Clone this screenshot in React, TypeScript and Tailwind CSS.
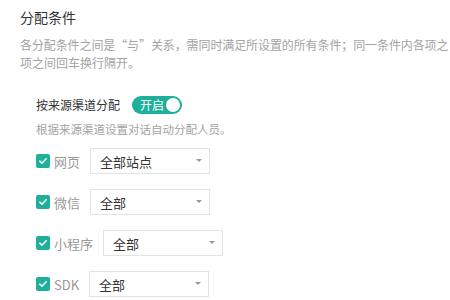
import { Fragment } from "react"

type Channel = {
    label: string
    value: string
}

const channels: Channel[] = [
    { label: "网页", value: "全部站点" },
    { label: "微信", value: "全部" },
    { label: "小程序", value: "全部" },
    { label: "SDK", value: "全部" },
]

function CheckBox() {
    return (
        <span className="flex size-[14px] shrink-0 items-center justify-center rounded-[2px] bg-[#1eb09a]">
            <svg viewBox="0 0 12 12" className="size-[10px]" fill="none">
                <path d="M2.2 6.2 L4.8 8.6 L9.8 3.4" stroke="white" strokeWidth="1.8" strokeLinecap="round" strokeLinejoin="round" />
            </svg>
        </span>
    )
}

function Select({ value }: { value: string }) {
    return (
        <div className="flex h-[26px] w-[120px] items-center justify-between border border-[#e3e3e3] bg-white pl-[9px] pr-[7px] text-[13px] leading-none text-[#333]">
            <span>{value}</span>
            <span className="mb-[1px] h-0 w-0 border-x-[3px] border-t-[3px] border-x-transparent border-t-[#999]" />
        </div>
    )
}

export default function App() {
    return (
        <div className="h-[300px] w-[450px] overflow-hidden bg-white pl-[20px] pt-[7px] font-['Noto_Sans_CJK_SC','Noto_Sans',sans-serif]">
            <h2 className="text-[14px] leading-[20px] text-[#333]">分配条件</h2>
            <div className="mt-[9px] text-[12px] leading-[18px] text-[#a3a3a3]">
                <p className="whitespace-nowrap tracking-[-0.1px]">各分配条件之间是“与”关系，需同时满足所设置的所有条件；同一条件内各项之</p>
                <p>项之间回车换行隔开。</p>
            </div>

            <div className="mt-[24px] pl-[16px]">
                <div className="flex items-center gap-[12px]">
                    <span className="text-[12px] leading-[18px] text-[#333]">按来源渠道分配</span>
                    <button className="flex h-[18px] w-[50px] items-center justify-between rounded-full bg-[#1eb09a] pl-[8px] pr-[2px]">
                        <span className="text-[12px] leading-none text-white">开启</span>
                        <span className="size-[14px] rounded-full bg-white" />
                    </button>
                </div>
                <p className="mt-[6px] text-[11.5px] leading-[18px] text-[#a3a3a3]">根据来源渠道设置对话自动分配人员。</p>

                <div className="mt-[10px] flex flex-col gap-[15px]">
                    {channels.map(ch => (
                        <Fragment key={ch.label}>
                            <div className="flex items-center">
                                <CheckBox />
                                <span className="ml-[4px] mr-[10px] text-[13px] leading-none text-[#999]">{ch.label}</span>
                                <Select value={ch.value} />
                            </div>
                        </Fragment>
                    ))}
                </div>
            </div>
        </div>
    )
}
